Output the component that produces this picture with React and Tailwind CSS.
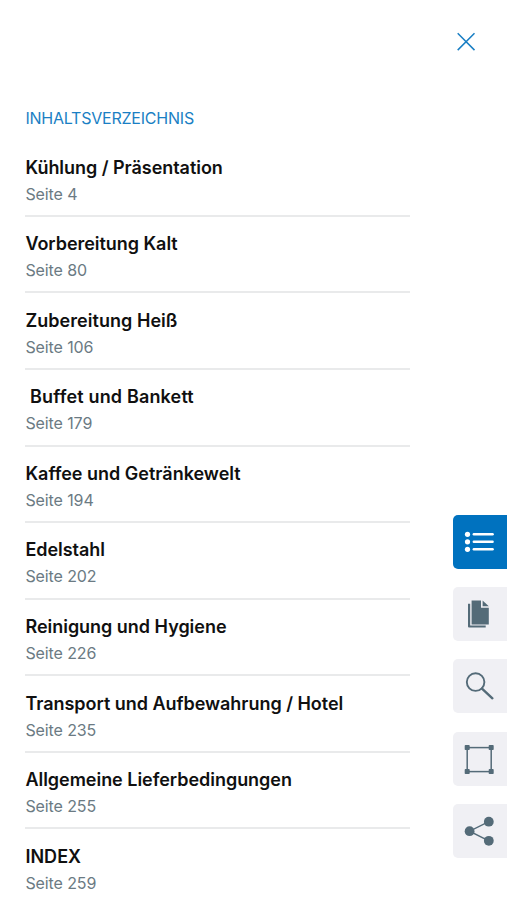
import { useState } from "react";

const chapters = [
  { title: "Kühlung / Präsentation", page: 4, tracking: "tracking-[-0.04px]" },
  { title: "Vorbereitung Kalt", page: 80, tracking: "tracking-[-0.04px]" },
  { title: "Zubereitung Heiß", page: 106, tracking: "tracking-[0.05px]" },
  { title: " Buffet und Bankett", page: 179, tracking: "tracking-[0.16px]" },
  { title: "Kaffee und Getränkewelt", page: 194, tracking: "tracking-[0px]" },
  { title: "Edelstahl", page: 202, tracking: "tracking-[-0.03px]" },
  { title: "Reinigung und Hygiene", page: 226, tracking: "tracking-[-0.02px]" },
  { title: "Transport und Aufbewahrung / Hotel", page: 235, tracking: "tracking-[-0.03px]" },
  { title: "Allgemeine Lieferbedingungen", page: 255, tracking: "tracking-[-0.03px]" },
  { title: "INDEX", page: 259, tracking: "tracking-[0.04px]" },
];

const ContentsIcon = () => (
  <svg viewBox="0 0 54 54" className="w-full h-full" fill="currentColor">
    {[19.3, 26.8, 34.3].map((y) => (
      <g key={y}>
        <circle cx="14.5" cy={y} r="2.6" />
        <rect x="19.6" y={y - 1.2} width="21.2" height="2.4" rx="1.2" />
      </g>
    ))}
  </svg>
);

const PagesIcon = () => (
  <svg viewBox="0 0 54 54" className="w-full h-full" fill="currentColor">
    <path d="M15 16.8h2.2v21.7h15.5v2H16a1 1 0 0 1-1-1z" />
    <path d="M18.6 13.4H28v7.4h7.8v16.6H18.6z" />
    <path d="M29.6 13.4l6.2 5.8h-6.2z" />
  </svg>
);

const SearchIcon = () => (
  <svg viewBox="0 0 54 54" className="w-full h-full" fill="none" stroke="currentColor">
    <circle cx="22.6" cy="23.1" r="8.8" strokeWidth="1.9" />
    <path d="M29 29.6l10.4 9.7" strokeWidth="2.4" strokeLinecap="round" />
  </svg>
);

const CropIcon = () => (
  <svg viewBox="0 0 54 54" className="w-full h-full" fill="currentColor">
    <rect x="14.2" y="15.6" width="24" height="24" fill="none" stroke="currentColor" strokeWidth="1.5" />
    <rect x="11.7" y="13.1" width="5" height="5" rx="0.8" />
    <rect x="35.7" y="13.1" width="5" height="5" rx="0.8" />
    <rect x="11.7" y="37.1" width="5" height="5" rx="0.8" />
    <rect x="35.7" y="37.1" width="5" height="5" rx="0.8" />
  </svg>
);

const ShareIcon = () => (
  <svg viewBox="0 0 54 54" className="w-full h-full" fill="currentColor">
    <path d="M35.8 17.7L16.6 27.2l19.2 9.6" fill="none" stroke="currentColor" strokeWidth="1.4" />
    <circle cx="16.6" cy="27.2" r="4.9" />
    <circle cx="35.8" cy="17.7" r="4.9" />
    <circle cx="35.8" cy="36.8" r="4.9" />
  </svg>
);

const tabs = [
  { id: "contents", label: "Inhaltsverzeichnis", Icon: ContentsIcon },
  { id: "pages", label: "Seiten", Icon: PagesIcon },
  { id: "search", label: "Suche", Icon: SearchIcon },
  { id: "crop", label: "Ausschnitt", Icon: CropIcon },
  { id: "share", label: "Teilen", Icon: ShareIcon },
];

const App = () => {
  const [activeTab, setActiveTab] = useState("contents");

  return (
    <div
      className="flex h-[900px] w-[507px] justify-between overflow-hidden bg-white"
      style={{ fontFamily: "Inter, sans-serif" }}
    >
      {/* Table of contents */}
      <main className="ml-[25.4px] w-[385px] shrink-0 pt-[106px]">
        <h1 className="h-[34.4px] text-[16px] leading-6 tracking-[-0.22px] text-[#1a7fc4]">
          INHALTSVERZEICHNIS
        </h1>

        <ul>
          {chapters.map((chapter) => (
            <li
              key={chapter.title}
              className="h-[76.56px] border-b-2 border-[#e9eaeb] pt-[15.3px] last:border-b-0"
            >
              <h2
                className={`whitespace-pre text-[18px] leading-6 font-semibold text-[#101010] ${chapter.tracking}`}
              >
                {chapter.title}
              </h2>
              <p className="pt-[2px] text-[16px] leading-6 tracking-[-0.1px] text-[#6b7a83]">
                Seite {chapter.page}
              </p>
            </li>
          ))}
        </ul>
      </main>

      {/* Close button and side tabs */}
      <aside className="flex w-[54px] shrink-0 flex-col">
        <button className="mt-[32px] ml-[3px] h-5 w-5 text-[#1a7fc4]" aria-label="Schließen">
          <svg viewBox="0 0 20 20" className="h-5 w-5" fill="none" stroke="currentColor" strokeWidth="1.5">
            <path d="M1.7 1.3l16.8 16.8M18.5 1.3L1.7 18.1" />
          </svg>
        </button>

        <nav className="mt-[463px] flex flex-col gap-[18.2px]">
          {tabs.map(({ id, label, Icon }) => (
            <button
              key={id}
              aria-label={label}
              onClick={() => setActiveTab(id)}
              className={`h-[54px] w-[54px] rounded-l-[5px] ${
                activeTab === id
                  ? "bg-[#0072bf] text-white"
                  : "bg-[#f0f0f4] text-[#546b78]"
              }`}
            >
              <Icon />
            </button>
          ))}
        </nav>
      </aside>
    </div>
  );
};

export default App;
